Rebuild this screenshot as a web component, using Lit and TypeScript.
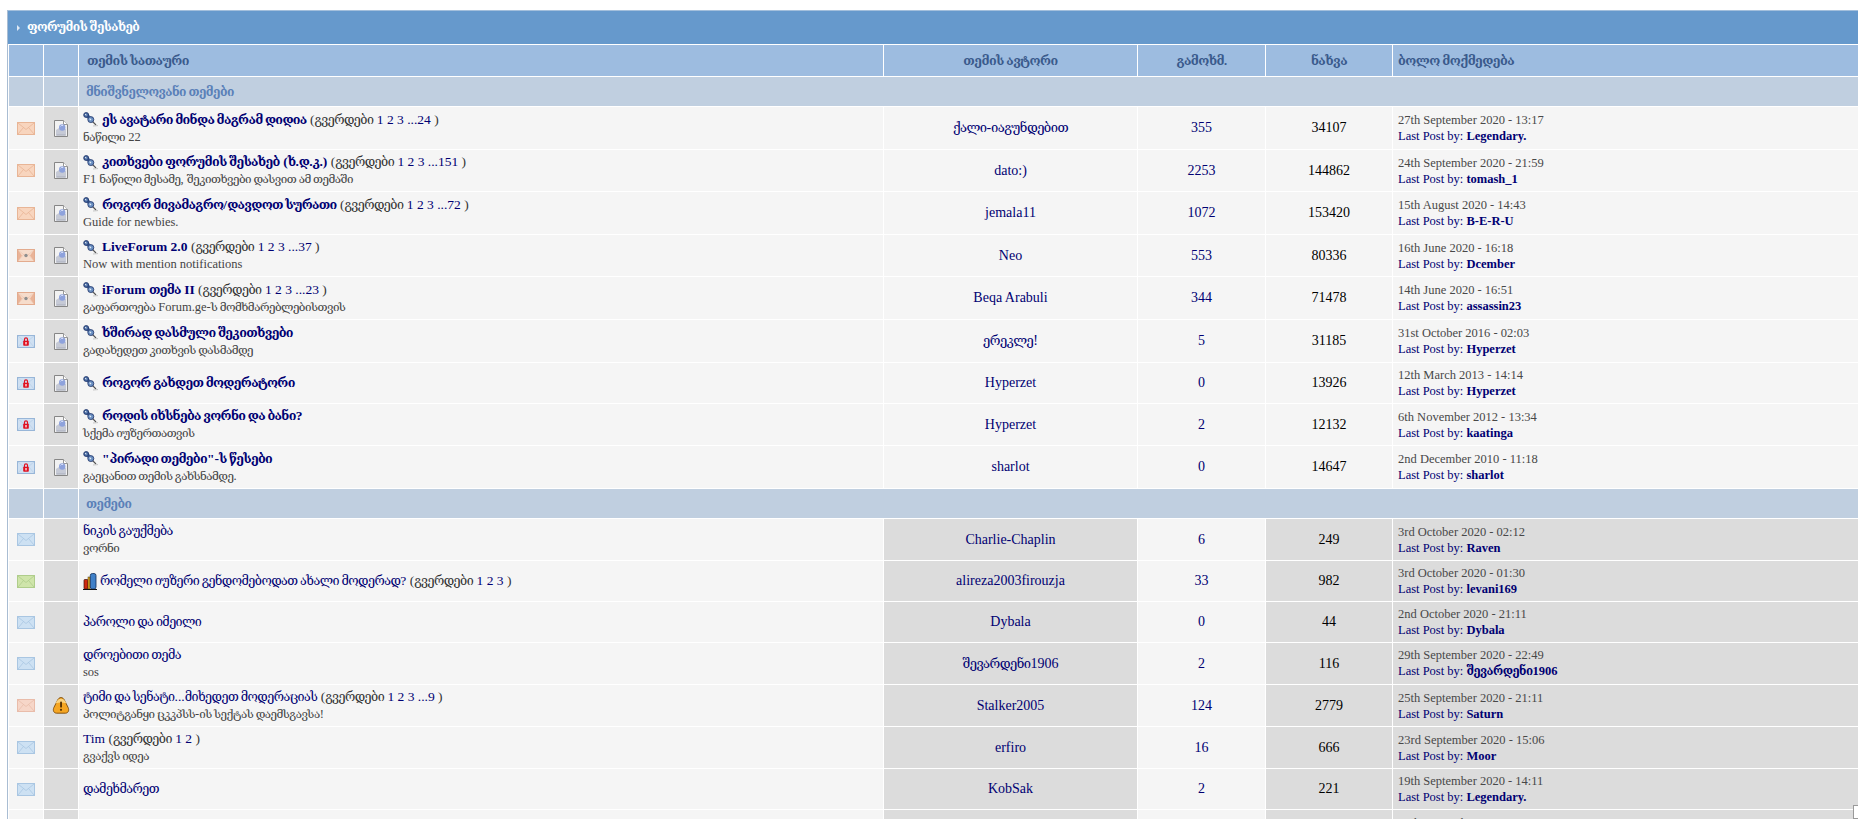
import { LitElement, html, css, svg } from "lit";
import { customElement } from "lit/decorators.js";

type Mail = "orange" | "dot" | "lock" | "blue" | "green" | "peach";
type Row = {
  mail: Mail;
  h: number;
  kind?: "warn";
  poll?: boolean;
  title: string;
  pages?: string;
  desc?: string;
  author: string;
  replies: string;
  views: string;
  date: string;
  by: string;
};

const pinned: Row[] = [
  { h: 42, mail: "orange", title: "ეს ავატარი მინდა მაგრამ დიდია", pages: "1 2 3 ...24", desc: "ნაწილი 22", author: "ქალი-იაგუნდებით", replies: "355", views: "34107", date: "27th September 2020 - 13:17", by: "Legendary." },
  { h: 41, mail: "orange", title: "კითხვები ფორუმის შესახებ (ხ.დ.კ.)", pages: "1 2 3 ...151", desc: "F1 ნაწილი მესამე, შეკითხვები დასვით ამ თემაში", author: "dato:)", replies: "2253", views: "144862", date: "24th September 2020 - 21:59", by: "tomash_1" },
  { h: 42, mail: "orange", title: "როგორ მივამაგრო/დავდოთ სურათი", pages: "1 2 3 ...72", desc: "Guide for newbies.", author: "jemala11", replies: "1072", views: "153420", date: "15th August 2020 - 14:43", by: "B-E-R-U" },
  { h: 41, mail: "dot", title: "LiveForum 2.0", pages: "1 2 3 ...37", desc: "Now with mention notifications", author: "Neo", replies: "553", views: "80336", date: "16th June 2020 - 16:18", by: "Dcember" },
  { h: 42, mail: "dot", title: "iForum თემა II", pages: "1 2 3 ...23", desc: "გაფართოება Forum.ge-ს მომხმარებლებისთვის", author: "Beqa Arabuli", replies: "344", views: "71478", date: "14th June 2020 - 16:51", by: "assassin23" },
  { h: 42, mail: "lock", title: "ხშირად დასმული შეკითხვები", desc: "გადახედეთ კითხვის დასმამდე", author: "ერეკლე!", replies: "5", views: "31185", date: "31st October 2016 - 02:03", by: "Hyperzet" },
  { h: 40, mail: "lock", title: "როგორ გახდეთ მოდერატორი", author: "Hyperzet", replies: "0", views: "13926", date: "12th March 2013 - 14:14", by: "Hyperzet" },
  { h: 41, mail: "lock", title: "როდის იხსნება ვორნი და ბანი?", desc: "სქემა იუზერთათვის", author: "Hyperzet", replies: "2", views: "12132", date: "6th November 2012 - 13:34", by: "kaatinga" },
  { h: 42, mail: "lock", title: "\"პირადი თემები\"-ს წესები", desc: "გაეცანით თემის გახსნამდე.", author: "sharlot", replies: "0", views: "14647", date: "2nd December 2010 - 11:18", by: "sharlot" },
];

const topics: Row[] = [
  { h: 41, mail: "blue", title: "ნიკის გაუქმება", desc: "ვორნი", author: "Charlie-Chaplin", replies: "6", views: "249", date: "3rd October 2020 - 02:12", by: "Raven" },
  { h: 40, mail: "green", poll: true, title: "რომელი იუზერი გენდომებოდათ ახალი მოდერად?", pages: "1 2 3", author: "alireza2003firouzja", replies: "33", views: "982", date: "3rd October 2020 - 01:30", by: "levani169" },
  { h: 40, mail: "blue", title: "პაროლი და იმეილი", author: "Dybala", replies: "0", views: "44", date: "2nd October 2020 - 21:11", by: "Dybala" },
  { h: 41, mail: "blue", title: "დროებითი თემა", desc: "sos", author: "შევარდენი1906", replies: "2", views: "116", date: "29th September 2020 - 22:49", by: "შევარდენი1906" },
  { h: 41, mail: "peach", kind: "warn", title: "ტიმი და სენატი...მიხედეთ მოდერაციას", pages: "1 2 3 ...9", desc: "პოლიტგანყი ცკკპსს-ის სექტას დაემსგავსა!", author: "Stalker2005", replies: "124", views: "2779", date: "25th September 2020 - 21:11", by: "Saturn" },
  { h: 41, mail: "blue", title: "Tim", pages: "1 2", desc: "გვაქვს იდეა", author: "erfiro", replies: "16", views: "666", date: "23rd September 2020 - 15:06", by: "Moor" },
  { h: 40, mail: "blue", title: "დამეხმარეთ", author: "KobSak", replies: "2", views: "221", date: "19th September 2020 - 14:11", by: "Legendary." },
  { h: 41, mail: "blue", title: "სხვადასხვა კითხვები ფორუმზე", pages: "1 2", author: "Saturn", replies: "3", views: "310", date: "14th September 2020 - 17:14", by: "Saturn" },
];

const mailColors: Record<Mail, [string, string]> = {
  orange: ["#f8d5be", "#e8b596"],
  peach: ["#f6d6c8", "#e9bcaa"],
  dot: ["#f6dccb", "#e3ab8e"],
  lock: ["#cfe0f2", "#98b6d8"],
  blue: ["#cde1f3", "#a9c6e2"],
  green: ["#cfe5aa", "#afcd8b"],
};

/** Georgian runs get their own span: the installed Georgian face is wider than the original's. */
function ka(s: string) {
  return s.split(/([\u10A0-\u10FF]+(?:[ ][\u10A0-\u10FF]+)*)/).map((p) =>
    /[\u10A0-\u10FF]/.test(p) ? html`<span class="ka">${p}</span>` : p
  );
}

function mailIcon(m: Mail) {
  const [f, s] = mailColors[m];
  const soft = m === "dot" || m === "lock";
  return html`<svg class="mail" width="18" height="13" viewBox="0 0 18 13">
    <rect x=".5" y=".5" width="17" height="12" fill="${f}" stroke="${s}"/>
    <path d="M1 1l8 6.500L17 1M1 12l5.500-6.500M17 12l-5.500-6.500" fill="none" stroke="${s}" stroke-width=".8" opacity="${soft ? 0.4 : 1}"/>
    ${m === "dot"
      ? svg`<path d="M1 1l4 5.500-4 5.500zM17 1l-4 5.500 4 5.500z" fill="#e9b397"/><circle cx="9" cy="6.500" r="1.700" fill="#8f8f8f"/>`
      : ""}
    ${m === "lock"
      ? svg`<rect x="6.200" y="5.800" width="5.600" height="5" rx=".8" fill="#e01020"/><path d="M7.500 6.300V4.300a1.500 1.500 0 0 1 3 0v2" fill="none" stroke="#e01020" stroke-width="1.200"/><rect x="8.400" y="7" width="1.200" height="2.400" fill="#fff"/>`
      : ""}
  </svg>`;
}

const docIcon = html`<svg width="14" height="17" viewBox="0 0 14 17">
  <path d="M.5.5h9l4 4v12H.5z" fill="#f2f2f2" stroke="#868686"/>
  <path d="M9.500.5v4h4" fill="#fff" stroke="#989898"/>
  <path d="M2 15.500V10l3-2 7 1v6.500z" fill="#c6cad6"/>
  <circle cx="8.200" cy="7.500" r="3.200" fill="#8ea2dc"/>
  <path d="M6.600 6.300a2 2 0 0 1 2.600-.8" fill="none" stroke="#dfe6f8" stroke-width="1"/>
  <path d="M2.500 15h9" stroke="#a8adba"/>
</svg>`;

const warnIcon = html`<svg width="18" height="17" viewBox="0 0 18 17">
  <path d="M9 .6c1.600 0 2.600 1 3.400 2.500l3.800 7.600c1 2.300.4 5.300-2.700 5.500H4.500C1.400 16 .8 13 1.800 10.700l3.800-7.600C6.400 1.600 7.400.6 9 .6z" fill="#f5a623" stroke="#7b4a0a" stroke-width=".9"/>
  <path d="M3.500 6.500C5 3 7 1.800 9 1.800s4 1.200 5.500 4.700C11 5 7 5 3.500 6.500z" fill="#fad27e"/>
  <rect x="8.100" y="4.600" width="1.900" height="6" rx=".9" fill="#5a3505"/>
  <circle cx="9" cy="12.800" r="1.100" fill="#5a3505"/>
</svg>`;

const pinIcon = html`<svg class="pin" width="15" height="15" viewBox="0 0 15 15">
  <path d="M9.500 9.500l3.500 3.500" stroke="#555" stroke-width="1.100"/>
  <path d="M10 14l5-.4" stroke="#c4c4c4" stroke-width="1"/>
  <path d="M3.500 3l4.500 4.500" stroke="#3e5f9a" stroke-width="3.500"/>
  <circle cx="3.200" cy="3" r="2.500" fill="#45689f" stroke="#1f3468" stroke-width=".8"/>
  <circle cx="7.800" cy="7.600" r="3" fill="#6b90c2" stroke="#1f3468" stroke-width=".8"/>
  <path d="M2.200 2.200l1.200 1.200M6.600 6.600l1.400 1.400" stroke="#e6eef8" stroke-width="1.100"/>
</svg>`;

const pollIcon = html`<svg class="poll" width="14" height="17" viewBox="0 0 14 17">
  <rect x="1" y="6.500" width="4" height="9.500" rx=".8" fill="#cf2a10" stroke="#3c1008" stroke-width=".7"/>
  <rect x="5" y="4" width="2" height="12" fill="#e8b020" stroke="#4b3408" stroke-width=".5"/>
  <rect x="7.300" y=".5" width="5.700" height="15.500" rx="2" fill="#3f80c8" stroke="#0e2c58" stroke-width=".8"/>
  <path d="M0 16.500h14" stroke="#111" stroke-width="1"/>
</svg>`;

@customElement("app-root")
export class AppRoot extends LitElement {
  static styles = css`
    :host {
      display: block;
      height: 819px;
      overflow: hidden;
      position: relative;
      background: #fff;
      font-family: "Liberation Serif", "DejaVu Serif", serif;
      font-size: 14px;
      color: #000072;
    }
    .ka { font-size: .93em; letter-spacing: -.045em; }
    .tt.b .ka { letter-spacing: -.055em; }
    .box {
      width: 1900px;
      margin: 10px 0 0 7px;
      border-left: 1px solid #a9bdd3;
      border-top: 1px solid #a3bfdc;
    }
    .title {
      height: 33px;
      display: flex;
      align-items: center;
      gap: 7px;
      padding-left: 9px;
      background: #6699cc;
      color: #fff;
      font-weight: bold;
      font-size: 13px;
    }
    .arrow {
      width: 0;
      height: 0;
      border-left: 3px solid #dfe9f5;
      border-top: 3px solid transparent;
      border-bottom: 3px solid transparent;
    }
    table {
      table-layout: fixed;
      border-collapse: separate;
      border-spacing: 1px;
      width: 1858px;
      background: #fff;
    }
    td, th {
      padding: 0;
      vertical-align: middle;
      font-weight: normal;
    }
    .head th {
      height: 31px;
      background: #9dbce0;
      color: #3a5a8c;
      font-weight: bold;
      font-size: 13.5px;
    }
    .head th.l { text-align: left; padding-left: 8px; }
    .head th.ll { text-align: left; padding-left: 5px; }
    .sec td {
      height: 29px;
      background: #c0cfe0;
      color: #5a80b8;
      font-weight: bold;
      font-size: 13px;
    }
    .sec td.t { padding-left: 7px; }
    tr.r td { background: #f5f5f5; }
    tr.r td.dark { background: #dcdcdc; }
    .ic svg { display: block; margin: 0 auto; }
    .topic { padding-left: 4px !important; line-height: 17px; }
    .line { display: flex; align-items: center; gap: 4px; white-space: nowrap; }
    .line.p { gap: 3px; }
    .tt { font-size: 13.5px; }
    .tt.b { font-weight: bold; }
    .pages { color: #333; font-size: 13.5px; }
    .pages b { font-weight: normal; color: #000072; }
    .desc { color: #444; font-size: 12.5px; white-space: nowrap; }
    .c { text-align: center; }
    .v { color: #000; }
    .last { padding-left: 5px !important; line-height: 16px; white-space: nowrap; font-size: 12.5px; }
    .date { color: #484848; }
    .last b { font-weight: bold; }
    .corner {
      position: absolute;
      right: 0;
      top: 805px;
      width: 5px;
      height: 14px;
      box-sizing: border-box;
      background: #fff;
      border: 1px solid #999;
      border-right: 0;
    }
  `;

  private row(r: Row, isPinned: boolean) {
    return html`<tr class="r">
      <td class="ic" style="height:${r.h}px">${mailIcon(r.mail)}</td>
      <td class="ic dark">${r.kind === "warn" ? warnIcon : isPinned ? docIcon : ""}</td>
      <td class="topic">
        <div class="line ${r.poll ? "p" : ""}">
          ${isPinned ? pinIcon : ""}${r.poll ? pollIcon : ""}
          <span><span class="tt ${isPinned ? "b" : ""}">${ka(r.title)}</span>${r.pages
            ? html`<span class="pages"> (<span class="ka">გვერდები</span> <b>${r.pages}</b> )</span>`
            : ""}</span>
        </div>
        ${r.desc ? html`<div class="desc">${ka(r.desc)}</div>` : ""}
      </td>
      <td class="c ${isPinned ? "" : "dark"}">${ka(r.author)}</td>
      <td class="c">${r.replies}</td>
      <td class="c v ${isPinned ? "" : "dark"}">${r.views}</td>
      <td class="last ${isPinned ? "" : "dark"}">
        <div class="date">${r.date}</div>
        <div>Last Post by: <b>${ka(r.by)}</b></div>
      </td>
    </tr>`;
  }

  render() {
    return html`<div class="box">
        <div class="title"><span class="arrow"></span><span class="ka">ფორუმის შესახებ</span></div>
        <table>
          <colgroup>
            <col style="width:34px" /><col style="width:34px" /><col style="width:804px" />
            <col style="width:253px" /><col style="width:127px" /><col style="width:126px" /><col />
          </colgroup>
          <tr class="head">
            <th></th><th></th><th class="l"><span class="ka">თემის სათაური</span></th>
            <th><span class="ka">თემის ავტორი</span></th><th><span class="ka">გამოხმ.</span></th><th><span class="ka">ნახვა</span></th><th class="ll"><span class="ka">ბოლო მოქმედება</span></th>
          </tr>
          <tr class="sec"><td></td><td></td><td class="t" colspan="5"><span class="ka">მნიშვნელოვანი თემები</span></td></tr>
          ${pinned.map((r) => this.row(r, true))}
          <tr class="sec"><td></td><td></td><td class="t" colspan="5"><span class="ka">თემები</span></td></tr>
          ${topics.map((r) => this.row(r, false))}
        </table>
      </div>
      <div class="corner"></div>`;
  }
}
